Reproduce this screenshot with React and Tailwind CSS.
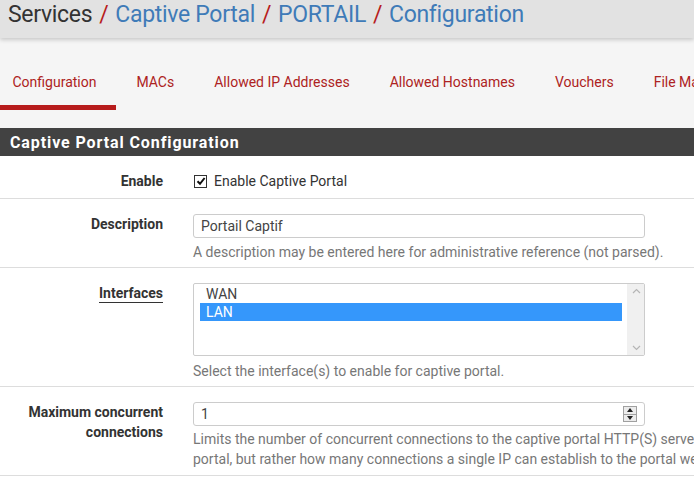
import React from "react";

const font = { fontFamily: "Roboto, 'Liberation Sans', sans-serif" };

function Row({ label, underline, children, className = "" }) {
  return (
    <div className={"flex border-b border-[#dddddd] " + className}>
      <div className="w-[178px] shrink-0 pr-[15px] text-right text-[14px] font-bold leading-[20px] text-[#333]">
        {underline ? (
          <span className="border-b border-[#333] pb-[1px]">{label}</span>
        ) : (
          label
        )}
      </div>
      <div className="ml-[15px] flex-1">{children}</div>
    </div>
  );
}

function Sep() {
  return <span className="mx-[1.5px] text-[#b71c1c]"> / </span>;
}

export default function App() {
  const tabs = ["Configuration", "MACs", "Allowed IP Addresses", "Allowed Hostnames", "Vouchers", "File Manager"];
  return (
    <div className="h-[478px] w-[694px] overflow-hidden bg-white" style={font}>
      <div className="relative z-10 h-[38px] bg-[#e2e2e2] pl-[8px] shadow-[0_2px_4px_rgba(0,0,0,0.18)]">
        <div className="whitespace-nowrap text-[23px] leading-[29px] tracking-[-0.3px] text-[#333]">
          Services
          <Sep />
          <span className="text-[#3f7bb8]">Captive Portal</span>
          <Sep />
          <span className="text-[#3f7bb8]">PORTAIL</span>
          <Sep />
          <span className="text-[#3f7bb8]">Configuration</span>
        </div>
      </div>
      <div className="h-[90px] bg-[#f5f5f5] pt-[34px]">
        <div className="ml-[-7.5px] flex whitespace-nowrap">
          {tabs.map((t, i) => (
            <div
              key={t}
              className={
                "px-[20px] pb-[13px] text-[14px] leading-[20px] text-[#ad2222] " +
                (i === 0 ? "border-b-[5px] border-[#b71c1c]" : "border-b-[5px] border-transparent")
              }
            >
              {t}
            </div>
          ))}
        </div>
      </div>
      <div className="h-[28px] bg-[#424242] pl-[10px] text-[16px] font-bold leading-[29px] tracking-[0.9px] text-white">
        Captive Portal Configuration
      </div>
      <div className="w-[1000px]">
        <Row label="Enable" className="h-[43px] pt-[15px]">
          <div className="flex items-center text-[14px] leading-[20px] text-[#333]">
            <span className="ml-[1px] mr-[7px] flex h-[13px] w-[13px] items-center justify-center border border-[#333] bg-white">
              <svg width="10" height="10" viewBox="0 0 10 10">
                <path d="M1.5 5.2 L4 7.8 L8.6 2" stroke="#111" strokeWidth="2" fill="none" />
              </svg>
            </span>
            Enable Captive Portal
          </div>
        </Row>
        <Row label="Description" className="h-[69px] pt-[15px]">
          <div className="flex h-[24px] w-[452px] items-center rounded-[3px] border border-[#cccccc] bg-white px-[7px] text-[14px] text-[#444]">
            Portail Captif
          </div>
          <div className="mt-[4px] text-[14px] leading-[20px] text-[#777]">
            A description may be entered here for administrative reference (not parsed).
          </div>
        </Row>
        <Row label="Interfaces" underline className="h-[119px] pt-[15px]">
          <div className="flex h-[73px] w-[452px] rounded-[2px] border border-[#cccccc] bg-white">
            <div className="flex-1 pl-[6px] pt-[1px] text-[14px] leading-[18px] text-[#444]">
              <div className="pl-[6px]">WAN</div>
              <div className="bg-[#3597fb] pl-[6px] text-white">LAN</div>
            </div>
            <div className="ml-[5px] flex w-[17px] flex-col items-center justify-between bg-[#f0f0f0] py-[4px] pl-[1px]">
              <svg width="9" height="6" viewBox="0 0 9 6"><path d="M1 5 L4.5 1.5 L8 5" stroke="#b5b5b5" strokeWidth="1.2" fill="none" /></svg>
              <svg width="9" height="6" viewBox="0 0 9 6"><path d="M1 1 L4.5 4.5 L8 1" stroke="#b5b5b5" strokeWidth="1.2" fill="none" /></svg>
            </div>
          </div>
          <div className="mt-[5px] text-[14px] leading-[20px] text-[#777]">
            Select the interface(s) to enable for captive portal.
          </div>
        </Row>
        <Row
          label={
            <span>
              Maximum concurrent
              <br />
              connections
            </span>
          }
          className="h-[89px] pt-[15px]"
        >
          <div className="flex h-[24px] w-[452px] items-center justify-between rounded-[3px] border border-[#cccccc] bg-white pl-[7px] pr-[7px] text-[14px] text-[#444]">
            <span>1</span>
            <span className="flex h-[16px] w-[14px] flex-col border border-[#a0a0a0] bg-[#ececec]">
              <span className="flex flex-1 items-center justify-center border-b border-[#a0a0a0]">
                <svg width="6" height="4" viewBox="0 0 6 4"><path d="M0 4 L3 0 L6 4Z" fill="#222" /></svg>
              </span>
              <span className="flex flex-1 items-center justify-center">
                <svg width="6" height="4" viewBox="0 0 6 4"><path d="M0 0 L3 4 L6 0Z" fill="#222" /></svg>
              </span>
            </span>
          </div>
          <div className="mt-[3px] whitespace-nowrap text-[14px] leading-[20px] text-[#777]">
            Limits the number of concurrent connections to the captive portal HTTP(S) server. This does not set how many users can be logged in to the captive
            <br />
            portal, but rather how many connections a single IP can establish to the portal web server.
          </div>
        </Row>
      </div>
    </div>
  );
}
